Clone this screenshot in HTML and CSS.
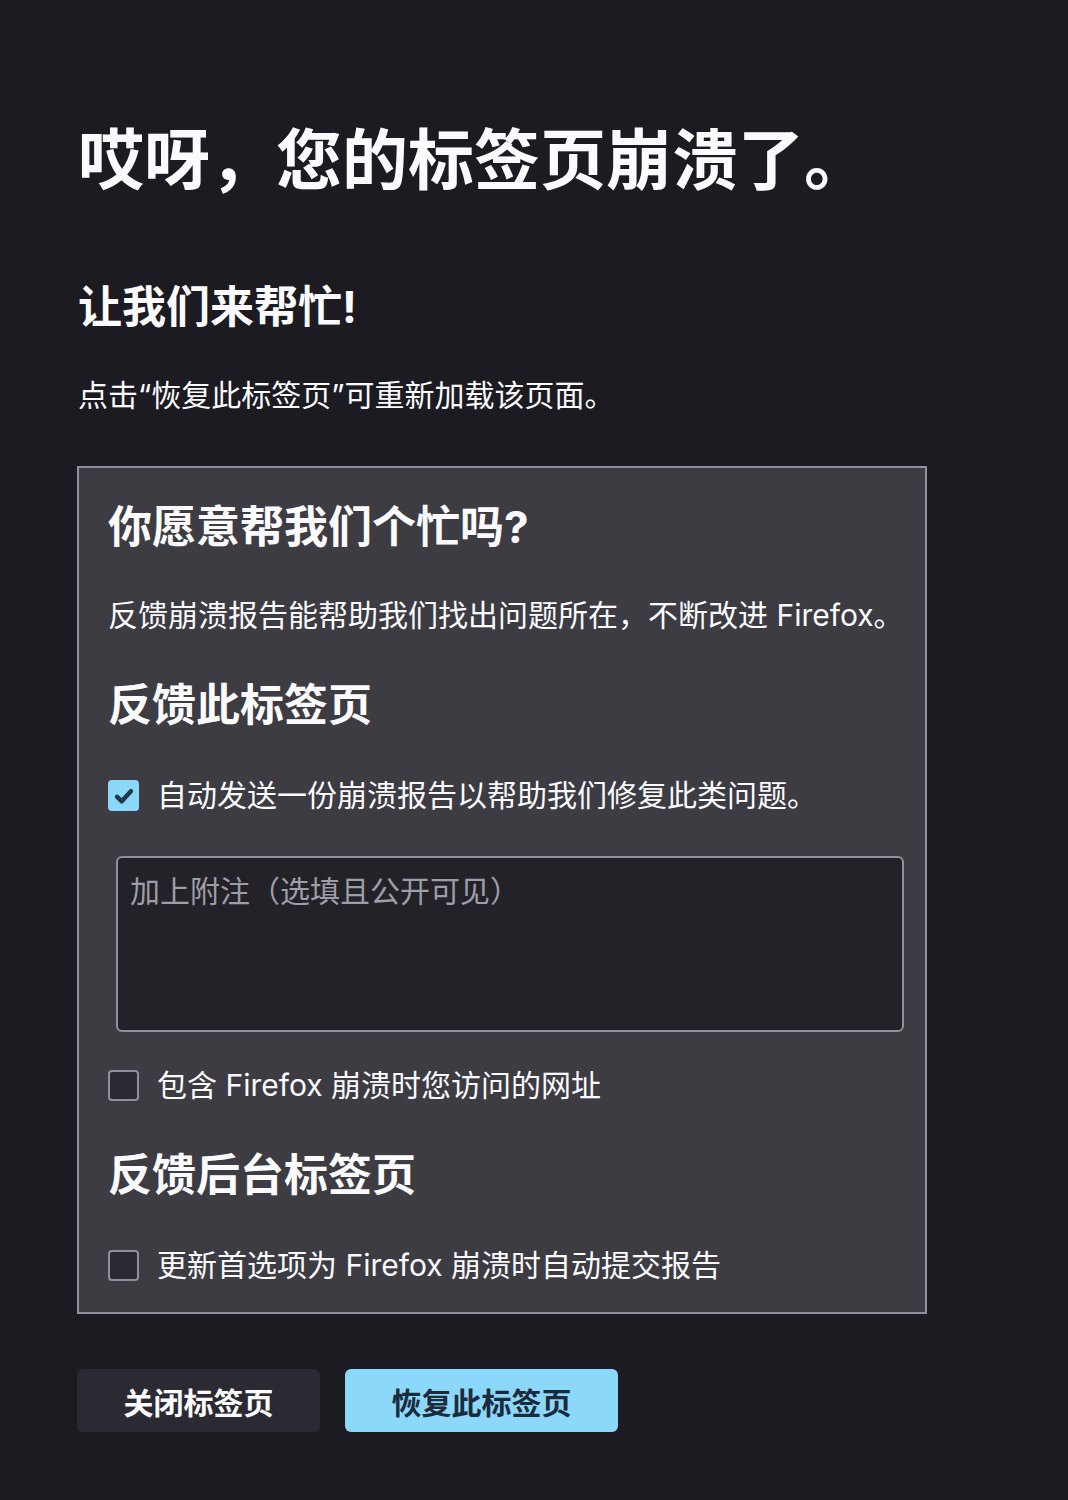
FILE: index.html
```html
<!DOCTYPE html>
<html lang="zh-CN">
<head>
<meta charset="utf-8">
<title>标签页崩溃</title>
<link rel="stylesheet" href="styles.css">
</head>
<body>
<main class="page">
  <h1 class="title">哎呀，您的标签页崩溃了。</h1>
  <h2 class="subtitle">让我们来帮忙!</h2>
  <p class="lead">点击“恢复此标签页”可重新加载该页面。</p>

  <section class="box">
    <h2 class="box-title">你愿意帮我们个忙吗?</h2>
    <p class="box-text">反馈崩溃报告能帮助我们找出问题所在，不断改进 Firefox。</p>

    <h2 class="box-title sec">反馈此标签页</h2>
    <label class="check-row">
      <span class="cb checked">
        <svg viewBox="0 0 16 16" width="24" height="24" aria-hidden="true"><path d="M3.4 8.6 L6.5 11.5 L12.6 4.8" fill="none" stroke="#22384d" stroke-width="3" stroke-linecap="round" stroke-linejoin="round"/></svg>
      </span>
      <span class="check-label">自动发送一份崩溃报告以帮助我们修复此类问题。</span>
    </label>
    <div class="comment">加上附注（选填且公开可见）</div>
    <label class="check-row row2">
      <span class="cb"></span>
      <span class="check-label">包含 Firefox 崩溃时您访问的网址</span>
    </label>

    <h2 class="box-title sec">反馈后台标签页</h2>
    <label class="check-row">
      <span class="cb"></span>
      <span class="check-label">更新首选项为 Firefox 崩溃时自动提交报告</span>
    </label>
  </section>

  <div class="buttons">
    <button class="btn btn-close">关闭标签页</button>
    <button class="btn btn-primary">恢复此标签页</button>
  </div>
</main>
</body>
</html>
```
FILE: styles.css
```css
html, body {
  margin: 0;
  padding: 0;
  background: #1c1b22;
}
body {
  color: #fbfbfe;
  font-family: Inter, "Noto Sans CJK SC", sans-serif;
  text-spacing-trim: space-all;
  width: 1068px;
  min-height: 1500px;
}
.page {
  margin-left: 77px;
  width: 850px;
  padding-top: 122px;
  padding-bottom: 60px;
}
.title {
  margin: 0;
  font-size: 66px;
  line-height: 76px;
  font-weight: 700;
  padding-left: 1px;
  white-space: nowrap;
}
.subtitle {
  margin: 83px 0 0;
  font-size: 44px;
  line-height: 52px;
  font-weight: 700;
  padding-left: 1px;
}
.lead {
  margin: 42px 0 0;
  font-size: 30px;
  line-height: 41px;
  padding-left: 1px;
}
.box {
  margin-top: 50px;
  background: #3d3c43;
  border: 2px solid #8f8f9d;
  padding: 33px 21px 26px 29px;
}
.box-title {
  margin: 0;
  font-size: 44px;
  line-height: 52px;
  font-weight: 700;
}
.box-title.sec {
  margin-top: 43px;
}
.box-text {
  margin: 42px 0 0;
  font-size: 30px;
  line-height: 41px;
}
.check-row {
  display: flex;
  align-items: center;
  gap: 18px;
  margin-top: 44px;
  font-size: 30px;
  line-height: 41px;
}
.check-row.row2 { margin-top: 33px; }
.cb {
  box-sizing: border-box;
  width: 31px;
  height: 31px;
  border: 2px solid #8f8f9d;
  border-radius: 4px;
  background: #2b2a33;
  display: flex;
  align-items: center;
  justify-content: center;
  flex: none;
}
.cb.checked {
  background: #8cd8fa;
  border-color: #8cd8fa;
}
.comment {
  margin: 40px 0 0 8px;
  height: 176px;
  box-sizing: border-box;
  border: 2px solid #8f8f9d;
  border-radius: 6px;
  background: #232229;
  color: #9e9ea6;
  font-size: 30px;
  line-height: 41px;
  padding: 13px 12px;
}
.buttons {
  display: flex;
  gap: 25px;
  margin-top: 55px;
}
.btn {
  height: 63px;
  border: none;
  border-radius: 6px;
  font-family: Inter, "Noto Sans CJK SC", sans-serif;
  font-size: 30px;
  font-weight: 700;
  padding: 0;
  cursor: pointer;
}
.btn-close {
  width: 243px;
  background: #2b2a33;
  color: #fbfbfe;
}
.btn-primary {
  width: 273px;
  background: #8cd8fa;
  color: #1c2b3c;
}
```
